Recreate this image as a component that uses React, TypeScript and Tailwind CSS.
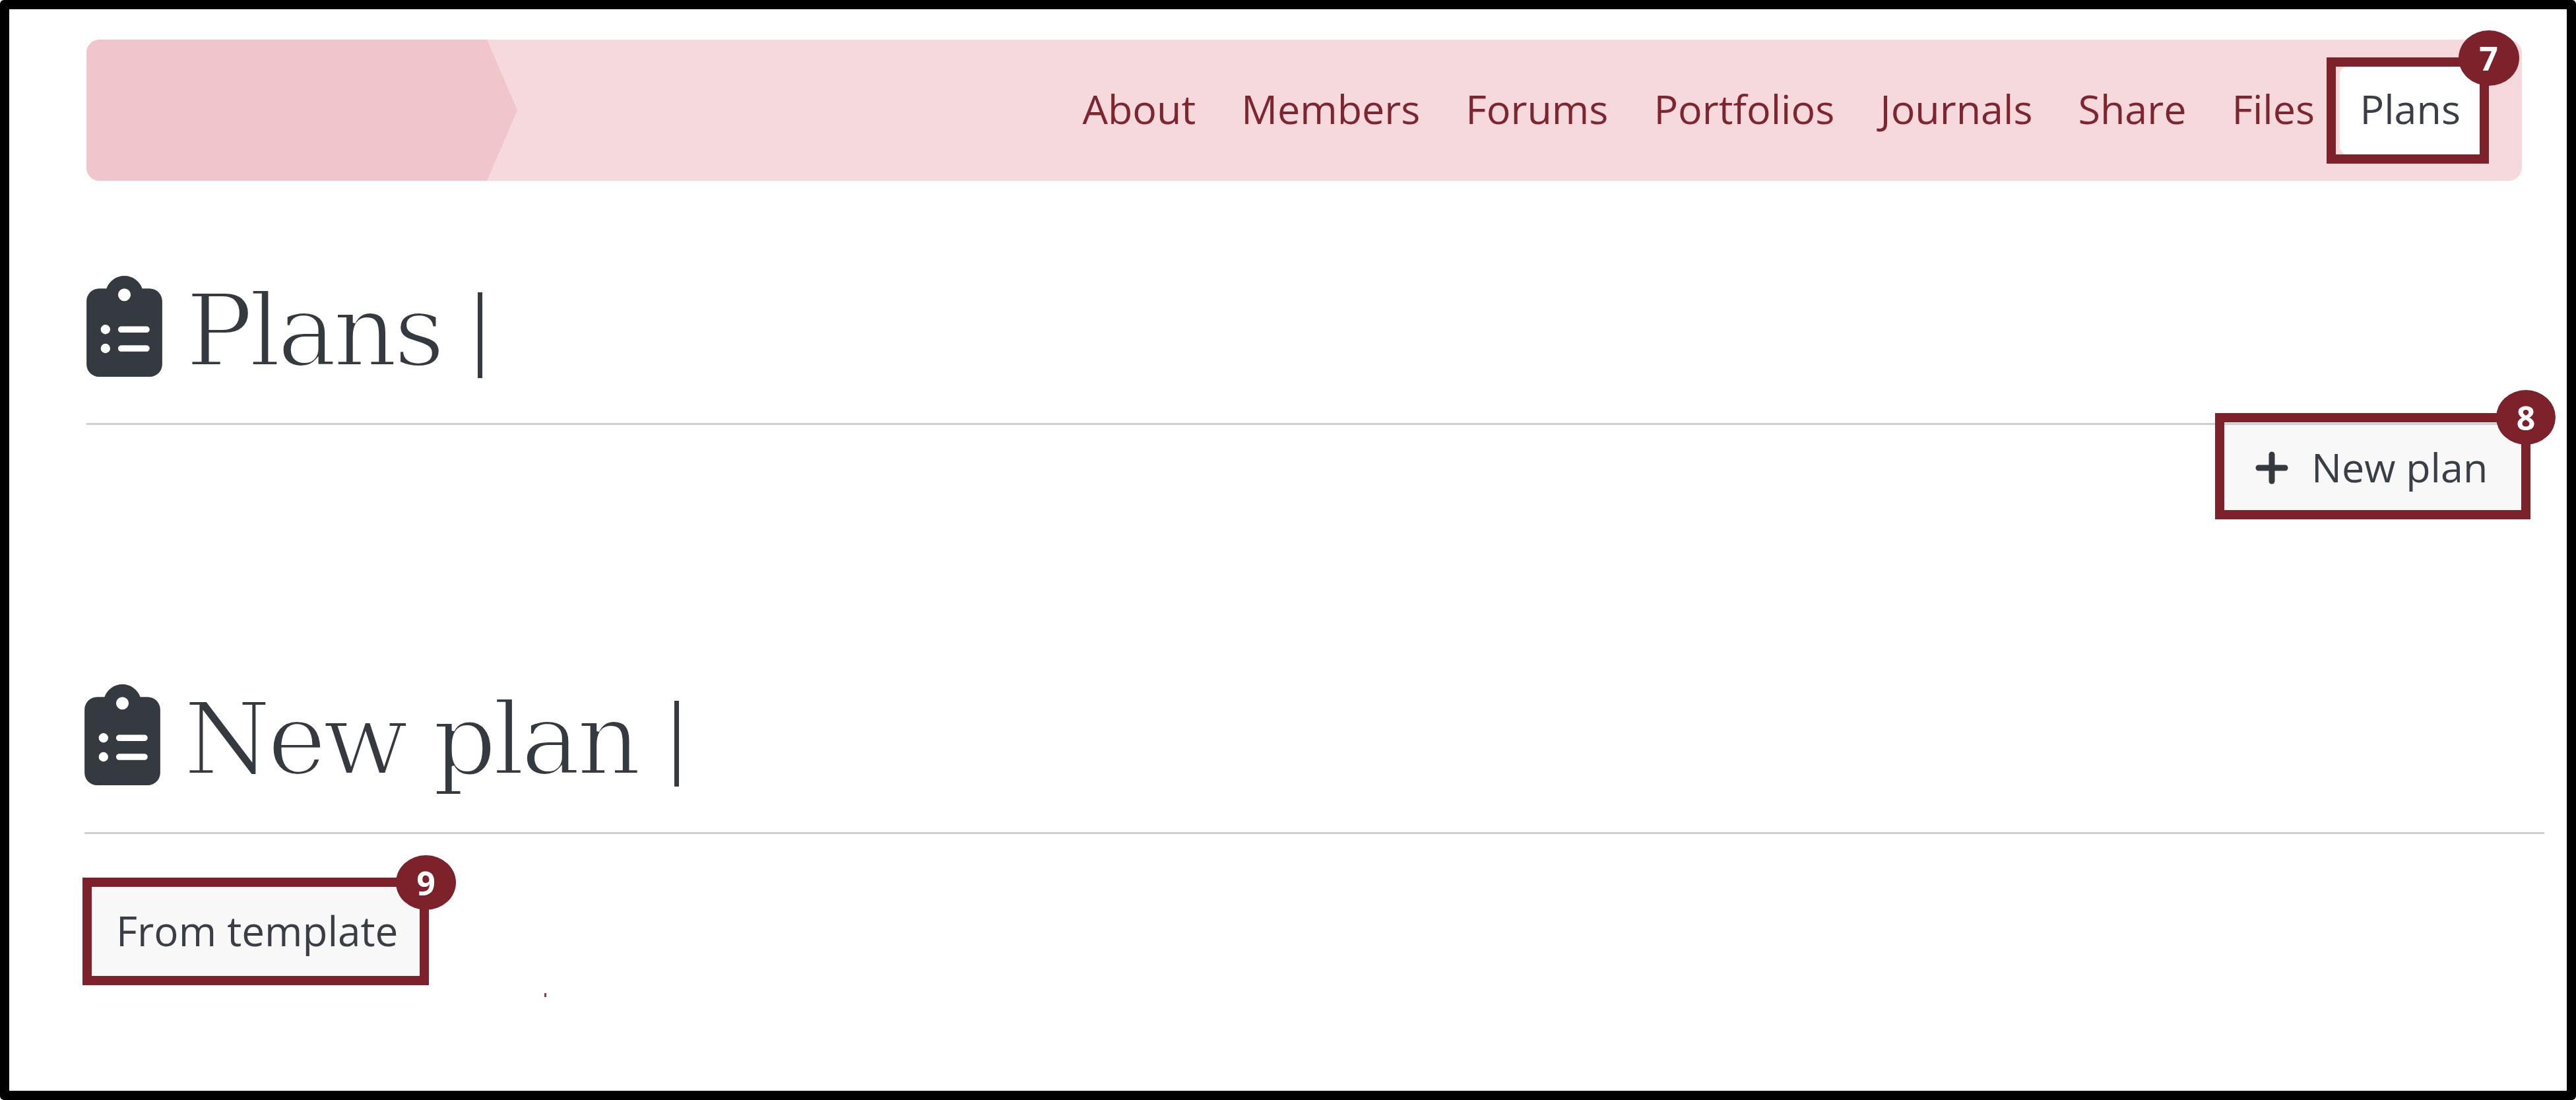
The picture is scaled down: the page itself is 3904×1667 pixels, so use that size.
import { FaClipboardList } from "react-icons/fa6";

function Badge({ n, className }: { n: string; className: string }) {
  return (
    <span className={"absolute flex items-center justify-center rounded-[50%] bg-[#7d212b] text-white font-bold text-[50px] leading-none " + className}>
      {n}
    </span>
  );
}

function Heading({ title }: { title: string }) {
  return (
    <h1 className="flex items-start h-[153px] text-[#343a40]">
      <FaClipboardList className="w-[115px] h-[153px] shrink-0 fill-[#343a40]" />
      <span className="ml-[35px] mt-[-1px] leading-[170px] font-normal whitespace-pre text-[152px] tracking-[-6px] font-['DejaVu_Serif',serif] [-webkit-text-stroke:4px_white]">
        {title}
      </span>
      <span className="ml-[56px] mt-[25px] w-[7px] h-[130px] bg-[#343a40]" />
    </h1>
  );
}

export default function App() {
  const links = ["About", "Members", "Forums", "Portfolios", "Journals", "Share", "Files"];
  return (
    <div className="relative w-[3904px] h-[1667px] box-border border-[14px] border-black rounded-[6px] bg-white overflow-hidden font-['Open_Sans',sans-serif]">
      {/* Top navigation */}
      <nav className="relative flex items-center justify-end mt-[46px] ml-[117px] w-[3691px] h-[214px] pr-[62px] rounded-[20px] bg-[#f5d9dd]">
        <div className="absolute left-0 top-0 w-[653px] h-full rounded-l-[20px] bg-[#f0c6cc] [clip-path:polygon(0_0,607px_0,100%_50%,607px_100%,0_100%)]" />
        {links.map((l) => (
          <a key={l} className="px-[34.5px] pb-[4px] text-[61px] leading-[82px] text-[#7f2530]">
            {l}
          </a>
        ))}
        <a className="relative ml-[3px] flex items-center h-[133px] pb-[4px] pl-[31px] pr-[31px] rounded-l-[12px] bg-white text-[61px] leading-[82px] text-[#3a3f47]">
          Plans
          <span className="absolute -left-[20px] -right-[12px] -top-[14px] -bottom-[14px] border-[14px] border-[#7d212b]">
            <Badge n="7" className="left-[186px] -top-[55px] w-[92px] h-[84px]" />
          </span>
        </a>
      </nav>

      {/* Plans section */}
      <section className="ml-[117px] w-[3704px] mt-[144px]">
        <Heading title="Plans" />
        <div className="mt-[70px] h-[3px] bg-[#cfcfcf]" />
        <button className="relative ml-auto mr-[14px] flex items-center w-[450px] h-[129px] bg-[#f8f8f8] text-[#3a3f47] text-[61px] leading-none">
          <svg viewBox="0 0 50 50" className="ml-[47px] w-[50px] h-[50px] stroke-[#343a40] stroke-[9] [stroke-linecap:round]">
            <line x1="5" y1="25" x2="45" y2="25" />
            <line x1="25" y1="5" x2="25" y2="45" />
          </svg>
          <span className="ml-[35px] pb-[3px]">New plan</span>
          <span className="absolute -left-[14px] -right-[14px] -top-[18px] -bottom-[14px] border-[14px] border-[#7d212b]">
            <Badge n="8" className="left-[412px] -top-[49px] w-[90px] h-[83px]" />
          </span>
        </button>
      </section>

      {/* New plan section */}
      <section className="ml-[114px] w-[3728px] mt-[264px]">
        <Heading title="New plan" />
        <div className="mt-[71px] h-[3px] bg-[#cfcfcf]" />
        <button className="relative mt-[79px] ml-[11px] flex items-center w-[498px] h-[136px] pl-[37px] pb-[2px] bg-[#f8f8f8] text-[#3a3f47] text-[62px] leading-none">
          From template
          <span className="absolute -left-[14px] -right-[13px] -top-[13px] -bottom-[14px] border-[14px] border-[#7d212b]">
            <Badge n="9" className="left-[461px] -top-[48px] w-[91px] h-[83px]" />
          </span>
        </button>
      </section>
      <span className="absolute left-[811px] top-[1491px] w-[3px] h-[6px] bg-[#b03040]" />
    </div>
  );
}
